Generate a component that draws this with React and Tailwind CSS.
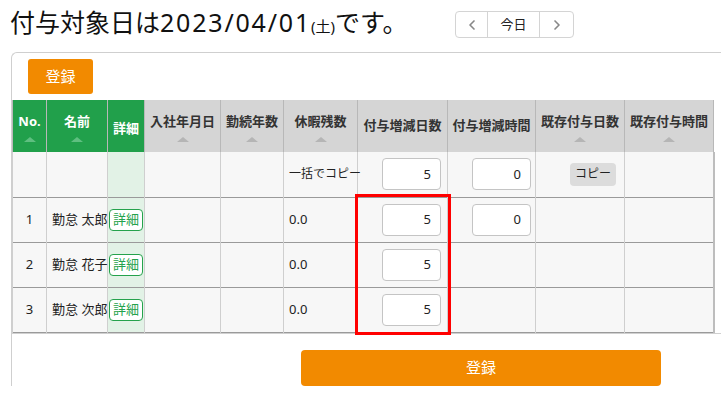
import { ChevronLeft, ChevronRight } from "lucide-react";

const font = { fontFamily: '"Noto Sans", "Noto Sans CJK JP", sans-serif' };

const columns = [
  { key: "no", label: "No.", width: 34, green: true, sort: true },
  { key: "name", label: "名前", width: 61, green: true, sort: true },
  { key: "detail", label: "詳細", width: 37, green: true, sort: false },
  { key: "hire", label: "入社年月日", width: 76, sort: true },
  { key: "years", label: "勤続年数", width: 63, sort: true },
  { key: "rest", label: "休暇残数", width: 74, sort: true },
  { key: "addDays", label: "付与増減日数", width: 90, sort: false },
  { key: "addHours", label: "付与増減時間", width: 88, sort: false },
  { key: "curDays", label: "既存付与日数", width: 89, sort: true },
  { key: "curHours", label: "既存付与時間", width: 89, sort: true },
];

const employees = [
  { no: 1, name: "勤怠 太郎", rest: "0.0", days: 5, hours: 0 },
  { no: 2, name: "勤怠 花子", rest: "0.0", days: 5 },
  { no: 3, name: "勤怠 次郎", rest: "0.0", days: 5 },
];

function SortMark({ green }) {
  return (
    <div
      className={`mx-auto mt-[6px] h-0 w-0 border-x-[6px] border-b-[5px] border-x-transparent ${
        green ? "border-b-[#5fbf80]" : "border-b-[#b5b5b5]"
      }`}
    />
  );
}

function NumBox({ value }) {
  return (
    <div className="ml-auto flex h-[32px] w-[59px] items-center justify-end rounded-[4px] border border-[#c4c4c4] bg-white pr-[9px] text-[13px] text-[#222]">
      {value}
    </div>
  );
}

function DetailButton() {
  return (
    <span className="inline-flex h-[22px] items-center rounded-[4px] border border-[#25a24c] bg-white px-[3px] text-[13px] text-[#25a24c]">
      詳細
    </span>
  );
}

export default function App() {
  return (
    <div className="h-[398px] w-[721px] overflow-hidden bg-white text-[#222]" style={font}>
      <div className="flex h-[40px] items-start pl-[10px] pt-[4px]">
        <h1 className="h-[36px] w-[445px] whitespace-nowrap text-[25px] leading-[36px] font-normal text-[#111]">
          付与対象日は<span className="tracking-[1.8px]">2023/04/01</span>
          <span className="text-[15px]">(土)</span>です。
        </h1>
        <div className="mt-[7px] flex h-[27px] overflow-hidden rounded-[4px] border border-[#d4d4d4] text-[13px]">
          <div className="flex w-[32px] items-center justify-center border-r border-[#d4d4d4] text-[#888]">
            <ChevronLeft size={16} strokeWidth={2.5} />
          </div>
          <div className="flex w-[52px] items-center justify-center border-r border-[#d4d4d4]">今日</div>
          <div className="flex w-[33px] items-center justify-center text-[#888]">
            <ChevronRight size={16} strokeWidth={2.5} />
          </div>
        </div>
      </div>

      <div className="ml-[11px] mt-[12px] w-[730px] rounded-tl-[6px] border-l border-t border-[#cfcfcf] pt-[6px]">
        <button className="ml-[16px] block h-[35px] w-[65px] rounded-[3px] bg-[#f28a00] text-[15px] text-white">
          登録
        </button>

        <div className="relative mt-[6px]">
          <table className="table-fixed border-collapse text-[13px]" style={{ width: 701 }}>
            <colgroup>
              {columns.map((c) => (
                <col key={c.key} style={{ width: c.width }} />
              ))}
            </colgroup>
            <thead>
              <tr className="h-[52px]">
                {columns.map((c) => (
                  <th
                    key={c.key}
                    className={`border-x border-[#b8b8b8] px-0 align-middle font-bold ${
                      c.green ? "bg-[#21a04b] text-white" : "bg-[#d5d5d5] text-[#333]"
                    }`}
                  >
                    <div className={c.sort ? "mt-[2px]" : c.key === "detail" ? "mt-[6px]" : ""}>{c.label}</div>
                    {c.sort && <SortMark green={c.green} />}
                  </th>
                ))}
              </tr>
            </thead>
            <tbody className="bg-[#f7f7f7]">
              <tr className="h-[45px] border-b border-[#9a9a9a]">
                <td className="border-x border-[#cfcfcf]" />
                <td className="border-x border-[#cfcfcf]" />
                <td className="border-x border-[#cfcfcf] bg-[#e2f2e6]" />
                <td className="border-x border-[#cfcfcf]" />
                <td className="border-x border-[#cfcfcf]" />
                <td className="border-x border-[#cfcfcf] pl-[5px] text-[12px] whitespace-nowrap">一括でコピー</td>
                <td className="border-x border-[#cfcfcf] pr-[6px]">
                  <NumBox value={5} />
                </td>
                <td className="border-x border-[#cfcfcf] pr-[4px]">
                  <NumBox value={0} />
                </td>
                <td className="border-x border-[#cfcfcf] pr-[8px] text-right">
                  <span className="inline-flex h-[23px] items-center rounded-[4px] bg-[#dcdcdc] px-[5px] text-[12px]">
                    コピー
                  </span>
                </td>
                <td className="border-l border-r-2 border-[#cfcfcf] border-r-[#bdbdbd]" />
              </tr>
              {employees.map((e) => (
                <tr key={e.no} className="h-[45px] border-b border-[#9a9a9a]">
                  <td className="border-x border-[#cfcfcf] text-center">{e.no}</td>
                  <td className="border-x border-[#cfcfcf] pl-[5px] whitespace-nowrap">{e.name}</td>
                  <td className="border-x border-[#cfcfcf] bg-[#e2f2e6] pl-[1px]">
                    <DetailButton />
                  </td>
                  <td className="border-x border-[#cfcfcf]" />
                  <td className="border-x border-[#cfcfcf]" />
                  <td className="border-x border-[#cfcfcf] pl-[5px]">{e.rest}</td>
                  <td className="border-x border-[#cfcfcf] pr-[6px]">
                    <NumBox value={e.days} />
                  </td>
                  <td className="border-x border-[#cfcfcf] pr-[4px]">
                    {e.hours !== undefined && <NumBox value={e.hours} />}
                  </td>
                  <td className="border-x border-[#cfcfcf]" />
                  <td className="border-l border-r-2 border-[#cfcfcf] border-r-[#bdbdbd]" />
                </tr>
              ))}
            </tbody>
          </table>
          <div className="border-t border-[#d0d0d0]" />
          <div className="pointer-events-none absolute left-[343px] top-[94px] h-[141px] w-[96px] border-[3px] border-[#ff0000]" />
        </div>

        <div className="flex pt-[16px]">
          <button className="ml-[289px] h-[36px] w-[360px] rounded-[4px] bg-[#f28a00] text-[15px] text-white">
            登録
          </button>
        </div>
      </div>
    </div>
  );
}
